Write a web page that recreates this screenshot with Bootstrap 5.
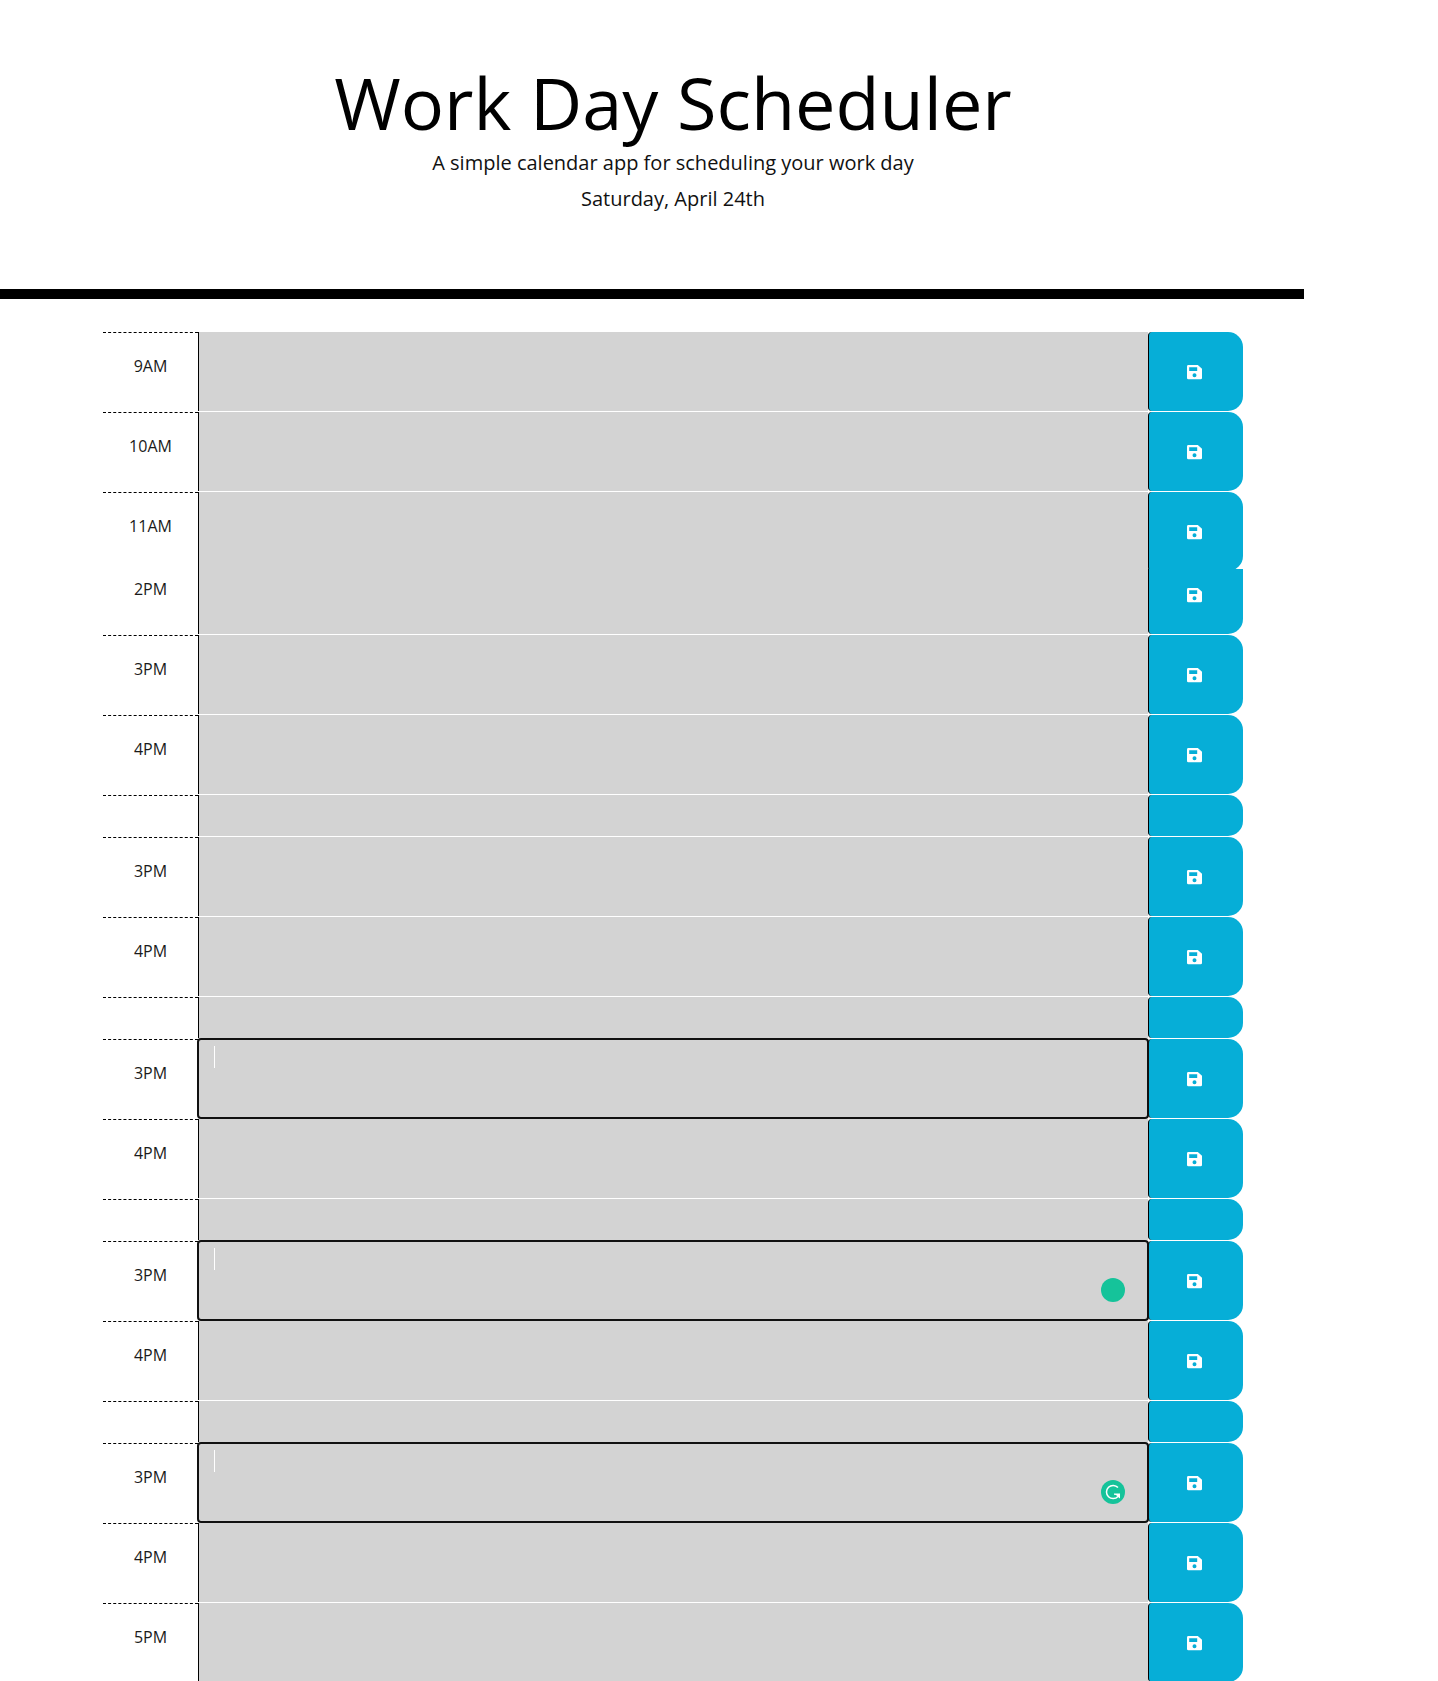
<!DOCTYPE html>
<html lang="en">
<head>
<meta charset="utf-8">
<meta name="viewport" content="width=device-width, initial-scale=1">
<title>Work Day Scheduler</title>
<link rel="stylesheet" href="https://cdn.jsdelivr.net/npm/bootstrap@5.3.0/dist/css/bootstrap.min.css">
<style>
body{font-family:"Open Sans",sans-serif;font-size:16px;line-height:1.5;color:#000;background:#fff;overflow:hidden;height:1681px}
.page{width:1346px}
.masthead{height:299px;padding-top:59px;width:1304px;border-bottom:10px solid #000;margin-bottom:33px}
.masthead-text{width:1346px}
.masthead h1{font-size:72px;font-weight:400;line-height:86px;margin-bottom:3px}
.masthead p{font-size:20px;line-height:30px;font-weight:400;color:#111;margin-bottom:6px}
.planner{width:1140px}
.slot{height:80px}
.slot-short{height:42px}
.cut-bottom{height:77px;overflow:hidden}
.cut-top{height:66px;overflow:hidden}
.cut-top .slot{margin-top:-14px}
.hour{width:95px;border-top:1px dashed #000;padding-top:21px;color:#1a1a1a}
.entry{background:#d3d3d3;border-left:1px solid #000;margin-bottom:1px}
.entry.active::after{content:"";position:absolute;inset:-1px -1px -1px -2px;border:2px solid #101010;border-radius:4px}
.caret{position:absolute;left:15px;top:7px;width:1px;height:22px;background:#fff}
.helper{position:absolute;right:23px;top:37px;width:24px;height:24px}
.save{width:95px;margin-bottom:1px;padding:0 3px 0 0;background:#06aed7;color:#fff;border:0;border-left:1px solid #000;border-radius:4px 15px 15px 4px}
.save svg{display:block;width:15px;height:15px;margin:1px auto 0}
</style>
<script src="https://cdn.jsdelivr.net/npm/bootstrap@5.3.0/dist/js/bootstrap.bundle.min.js"></script>
</head>
<body>
<svg class="d-none">
  <symbol id="disk" viewBox="0 0 15 15"><path fill="currentColor" fill-rule="evenodd" d="M1.4 0H10.8L15 3.8V12.9Q15 14.3 13.6 14.3H1.4Q0 14.3 0 12.9V1.4Q0 0 1.4 0ZM2.2 2.2V6H10.2V2.2ZM7.5 8.2A2 2 0 1 0 7.5 12.2A2 2 0 1 0 7.5 8.2Z"/></symbol>
</svg>
<div class="page">
  <header class="masthead">
    <div class="masthead-text text-center">
      <h1>Work Day Scheduler</h1>
      <p>A simple calendar app for scheduling your work day</p>
      <p>Saturday, April 24th</p>
    </div>
  </header>
  <main class="planner mx-auto">
    <div class="slot d-flex"><div class="hour text-center">9AM</div><div class="entry flex-grow-1"></div><button class="save" aria-label="Save"><svg><use href="#disk"/></svg></button></div>
    <div class="slot d-flex"><div class="hour text-center">10AM</div><div class="entry flex-grow-1"></div><button class="save" aria-label="Save"><svg><use href="#disk"/></svg></button></div>
    <div class="cut-bottom"><div class="slot d-flex"><div class="hour text-center">11AM</div><div class="entry flex-grow-1"></div><button class="save" aria-label="Save"><svg><use href="#disk"/></svg></button></div></div>
    <div class="cut-top"><div class="slot d-flex"><div class="hour text-center">2PM</div><div class="entry flex-grow-1"></div><button class="save" aria-label="Save"><svg><use href="#disk"/></svg></button></div></div>
    <div class="slot d-flex"><div class="hour text-center">3PM</div><div class="entry flex-grow-1"></div><button class="save" aria-label="Save"><svg><use href="#disk"/></svg></button></div>
    <div class="slot d-flex"><div class="hour text-center">4PM</div><div class="entry flex-grow-1"></div><button class="save" aria-label="Save"><svg><use href="#disk"/></svg></button></div>
    <div class="slot slot-short d-flex"><div class="hour"></div><div class="entry flex-grow-1"></div><div class="save"></div></div>

    <div class="slot d-flex"><div class="hour text-center">3PM</div><div class="entry flex-grow-1"></div><button class="save" aria-label="Save"><svg><use href="#disk"/></svg></button></div>
    <div class="slot d-flex"><div class="hour text-center">4PM</div><div class="entry flex-grow-1"></div><button class="save" aria-label="Save"><svg><use href="#disk"/></svg></button></div>
    <div class="slot slot-short d-flex"><div class="hour"></div><div class="entry flex-grow-1"></div><div class="save"></div></div>

    <div class="slot d-flex"><div class="hour text-center">3PM</div><div class="entry active position-relative flex-grow-1"><span class="caret"></span></div><button class="save" aria-label="Save"><svg><use href="#disk"/></svg></button></div>
    <div class="slot d-flex"><div class="hour text-center">4PM</div><div class="entry flex-grow-1"></div><button class="save" aria-label="Save"><svg><use href="#disk"/></svg></button></div>
    <div class="slot slot-short d-flex"><div class="hour"></div><div class="entry flex-grow-1"></div><div class="save"></div></div>

    <div class="slot d-flex"><div class="hour text-center">3PM</div><div class="entry active position-relative flex-grow-1"><span class="caret"></span><svg class="helper" viewBox="0 0 24 24"><circle cx="12" cy="12" r="12" fill="#15c39a"/></svg></div><button class="save" aria-label="Save"><svg><use href="#disk"/></svg></button></div>
    <div class="slot d-flex"><div class="hour text-center">4PM</div><div class="entry flex-grow-1"></div><button class="save" aria-label="Save"><svg><use href="#disk"/></svg></button></div>
    <div class="slot slot-short d-flex"><div class="hour"></div><div class="entry flex-grow-1"></div><div class="save"></div></div>

    <div class="slot d-flex"><div class="hour text-center">3PM</div><div class="entry active position-relative flex-grow-1"><span class="caret"></span><svg class="helper" viewBox="0 0 24 24"><circle cx="12" cy="12" r="12" fill="#15c39a"/><path d="M17 7.6A6.6 6.6 0 1 0 17 16.4L18 14.6" fill="none" stroke="#fff" stroke-width="1.5"/><path d="M13 13.4H19V18.6L17.4 17.2L15 15L13 14.8Z" fill="#fff"/></svg></div><button class="save" aria-label="Save"><svg><use href="#disk"/></svg></button></div>
    <div class="slot d-flex"><div class="hour text-center">4PM</div><div class="entry flex-grow-1"></div><button class="save" aria-label="Save"><svg><use href="#disk"/></svg></button></div>
    <div class="slot d-flex"><div class="hour text-center">5PM</div><div class="entry flex-grow-1"></div><button class="save" aria-label="Save"><svg><use href="#disk"/></svg></button></div>
  </main>
</div>
</body>
</html>
